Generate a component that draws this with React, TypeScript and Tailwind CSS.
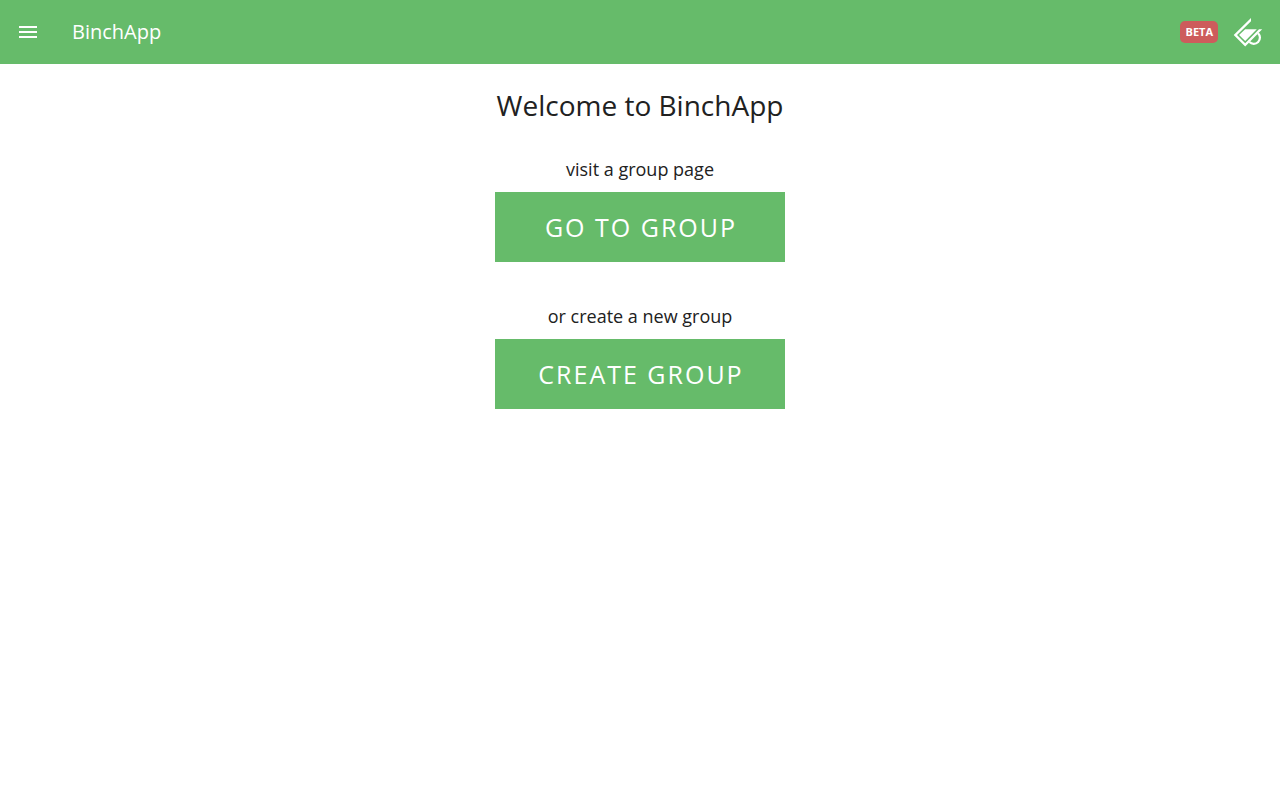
import type { ReactNode } from "react";

function MenuIcon() {
  return (
    <svg viewBox="0 0 24 24" className="size-6" fill="currentColor" aria-hidden="true">
      <path d="M3 18h18v-2H3v2zm0-5h18v-2H3v2zm0-7v2h18V6H3z" />
    </svg>
  );
}

function CupIcon() {
  return (
    <svg viewBox="0 0 32 32" className="size-8" fill="none" aria-hidden="true">
      <path d="M19 2v3.2L5 19l8.2 8.2L27 13.3h3.2L13.2 30.5 1.7 19z" fill="currentColor" />
      <path d="M13.2 13.3h11.6L13.2 25l-6.1-6z" fill="currentColor" />
      <path d="M26.1 17.2A5.5 5.5 0 1 1 17.4 26" stroke="currentColor" strokeWidth="2.2" />
    </svg>
  );
}

function Action({ label, children }: { label: string; children: ReactNode }) {
  return (
    <section className="flex flex-col items-center gap-[9px]">
      <p className="text-lg leading-7">{label}</p>
      <button
        type="button"
        className="h-[70px] w-[290px] bg-[#66bb6a] pt-0.5 pl-0.5 text-[25px] tracking-[2px] text-white uppercase hover:bg-[#5cb060]"
      >
        {children}
      </button>
    </section>
  );
}

export default function App() {
  return (
    <div className="min-h-screen bg-white font-['Open_Sans',sans-serif] text-[#212121]">
      <header className="flex h-16 items-center bg-[#66bb6a] px-4 text-white">
        <button type="button" aria-label="Open menu" className="mr-8">
          <MenuIcon />
        </button>
        <h1 className="flex-1 text-xl">BinchApp</h1>
        <span className="mr-3.5 rounded-[5px] bg-[#cd5c5c] px-[5px] py-[3px] text-[11px] leading-4 font-bold">
          BETA
        </span>
        <a href="#home" aria-label="BinchApp home">
          <CupIcon />
        </a>
      </header>
      <main className="flex flex-col items-center px-4 pt-[19px]">
        <h2 className="mb-7 text-[28px] leading-[44px]">Welcome to BinchApp</h2>
        <div className="flex flex-col gap-10">
          <Action label="visit a group page">Go to group</Action>
          <Action label="or create a new group">Create group</Action>
        </div>
      </main>
    </div>
  );
}
